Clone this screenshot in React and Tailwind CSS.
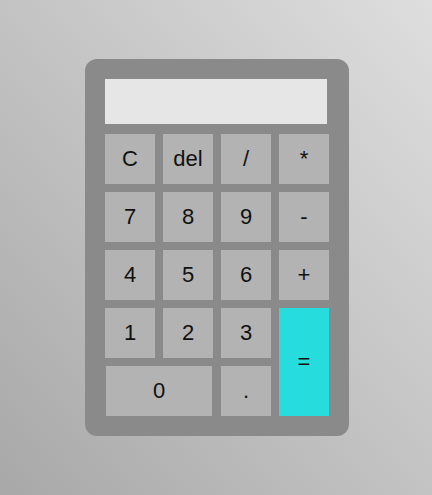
import React from "react";

const Btn = ({ children, className = "", bg = "bg-[#b3b3b3]" }) => (
  <button
    className={`flex items-center justify-center ${bg} text-[22px] leading-none text-[#111] ${className}`}
  >
    {children}
  </button>
);

export default function App() {
  return (
    <div
      className="flex h-[495px] w-[432px] items-center justify-center bg-[linear-gradient(to_top_right,#a8a8a8,#dedede)] pl-[2px]"
      style={{ fontFamily: '"Liberation Sans", Arial, sans-serif' }}
    >
      <div className="rounded-[12px] bg-[#8a8a8a] p-[20px]">
        <div className="mb-[10px] h-[45px] w-[222px] bg-[#e6e6e6]" />
        <div className="grid grid-cols-[repeat(4,50px)] auto-rows-[50px] gap-[8px]">
          <Btn>C</Btn>
          <Btn>del</Btn>
          <Btn>/</Btn>
          <Btn>*</Btn>
          <Btn>7</Btn>
          <Btn>8</Btn>
          <Btn>9</Btn>
          <Btn>-</Btn>
          <Btn>4</Btn>
          <Btn>5</Btn>
          <Btn>6</Btn>
          <Btn>+</Btn>
          <Btn>1</Btn>
          <Btn>2</Btn>
          <Btn>3</Btn>
          <Btn bg="bg-[#26dcdc]" className="row-span-2">=</Btn>
          <Btn className="col-span-2 mx-px">0</Btn>
          <Btn>.</Btn>
        </div>
      </div>
    </div>
  );
}
